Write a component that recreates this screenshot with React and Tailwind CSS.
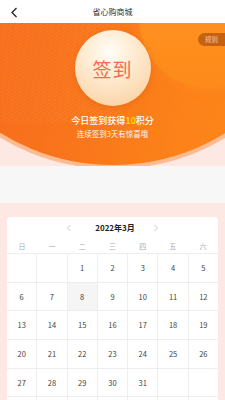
import React from "react";

const font = { fontFamily: '"Noto Sans CJK SC", "Noto Sans", sans-serif' };

const weekdays = ["日", "一", "二", "三", "四", "五", "六"];

function buildCells() {
  const cells = [];
  for (let i = 0; i < 2; i++) cells.push(null);
  for (let d = 1; d <= 31; d++) cells.push(d);
  while (cells.length < 42) cells.push(null);
  return cells;
}

export default function App() {
  const cells = buildCells();
  return (
    <div className="w-[225px] min-h-[400px] bg-[#fde8e4] overflow-hidden" style={font}>
      {/* header */}
      <div className="h-[23px] bg-white relative flex items-center justify-center">
        <svg className="absolute left-[10px] top-[7px]" width="9" height="11" viewBox="0 0 9 11">
          <path d="M6.5 1 L2 5.5 L6.5 10" fill="none" stroke="#222" strokeWidth="1.3" />
        </svg>
        <span className="text-[8px] text-[#333] leading-none">省心购商城</span>
      </div>

      {/* orange hero */}
      <div className="relative h-[143px] overflow-hidden bg-[#fde8e4]">
        <div className="absolute left-[-105.5px] top-[-290px] w-[436px] h-[436px] rounded-full bg-[#fcbb90]" />
        <div className="absolute left-[-101.5px] top-[-286px] w-[428px] h-[428px] rounded-full overflow-hidden bg-[linear-gradient(100deg,#f5661c_0%,#f8711c_40%,#fc8219_70%,#fe8a18_100%)]">
          <div className="absolute left-[102px] top-[286px] w-[120px] h-[100px] bg-[repeating-linear-gradient(150deg,rgba(255,255,255,0.05)_0px,rgba(255,255,255,0.05)_1px,transparent_1px,transparent_3px)]" />
          <div className="absolute left-[262px] top-[286px] w-[140px] h-[140px] rounded-full bg-[linear-gradient(180deg,#fe8c1c_0%,#ff8f1e_60%,#fd8a1a_100%)] shadow-[0_0_12px_rgba(255,160,40,0.35)]" style={{ transform: "translate(-22px,-75px)" }} />
        </div>

        <div className="absolute right-0 top-[10px] h-[13px] w-[27px] rounded-l-full bg-[#b85612]/80 flex items-center justify-center">
          <span className="text-[6.5px] text-[#f2c4a2] leading-none">规则</span>
        </div>

        <div className="relative flex flex-col items-center pt-[7px]">
          <div className="w-[76px] h-[76px] rounded-full flex items-center justify-center bg-[radial-gradient(circle_at_45%_28%,#fffdf8_0%,#fff0dc_25%,#fde0bd_60%,#fac996_100%)] shadow-[0_2px_6px_rgba(200,80,0,0.3)]">
            <span className="text-[19px] leading-none text-[#f26b4d] tracking-[1px]">签到</span>
          </div>
          <div className="mt-[10px] text-[9px] leading-none text-white font-medium">
            今日签到获得<span className="text-[#ffd800] font-bold">10</span>积分
          </div>
          <div className="mt-[5px] text-[7.5px] leading-none text-white/95">连续签到3天有惊喜哦</div>
        </div>
      </div>

      {/* gray band */}
      <div className="h-[37px] bg-[#f7f7f7]" />

      {/* calendar */}
      <div className="pt-[14px] px-[7px]">
        <div className="bg-white rounded-[4px] overflow-hidden">
          <div className="h-[22px] flex items-center justify-center">
            <svg width="6" height="8" viewBox="0 0 6 8" className="mr-[23px]">
              <path d="M4.5 1 L1.5 4 L4.5 7" fill="none" stroke="#bbb" strokeWidth="0.8" />
            </svg>
            <span className="text-[8px] font-bold text-[#222] leading-none">2022年3月</span>
            <svg width="6" height="8" viewBox="0 0 6 8" className="ml-[18px]">
              <path d="M1.5 1 L4.5 4 L1.5 7" fill="none" stroke="#bbb" strokeWidth="0.8" />
            </svg>
          </div>
          <div className="h-[14px] grid grid-cols-7 items-center">
            {weekdays.map((w) => (
              <div key={w} className="text-center text-[7px] text-[#aaa] leading-none">{w}</div>
            ))}
          </div>
          <div className="grid grid-cols-7 gap-px bg-[#eeeeee] pt-px">
            {cells.map((d, i) => (
              <div
                key={i}
                className={`h-[27.7px] flex items-center justify-center ${d === 8 ? "bg-[#f5f5f5]" : "bg-white"}`}
              >
                {d !== null && <span className="text-[7.5px] text-[#444] leading-none">{d}</span>}
              </div>
            ))}
          </div>
        </div>
      </div>
    </div>
  );
}
